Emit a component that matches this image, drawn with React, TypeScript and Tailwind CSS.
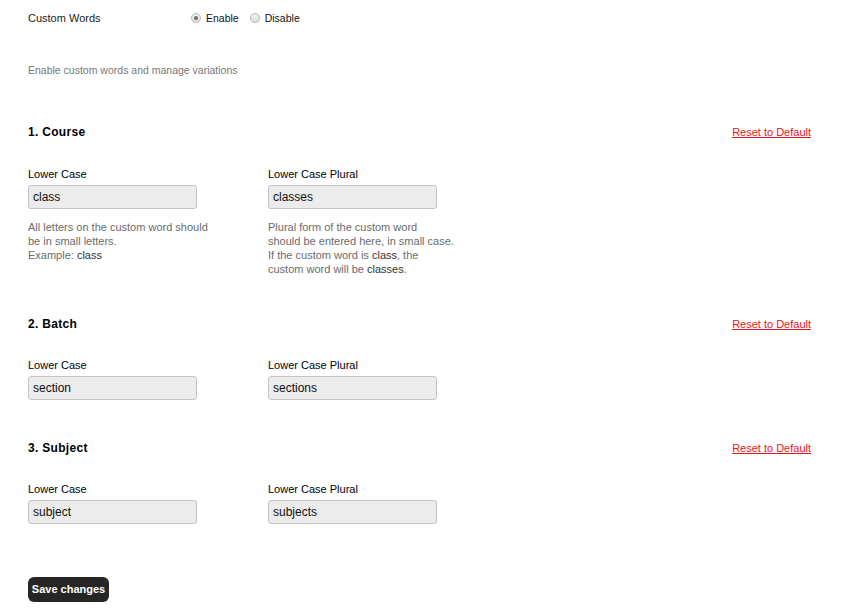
import React, { useState } from 'react';

// Sections of custom words: singular + plural forms
const sections = [
  {
    no: 1,
    title: 'Course',
    singular: 'class',
    plural: 'classes',
    help: true,
  },
  { no: 2, title: 'Batch', singular: 'section', plural: 'sections', help: false },
  { no: 3, title: 'Subject', singular: 'subject', plural: 'subjects', help: false },
];

const Radio: React.FC<{ checked: boolean; label: string; onClick: () => void }> = ({ checked, label, onClick }) => (
  <label className="flex items-center cursor-pointer" onClick={onClick}>
    <span className="w-[10px] h-[10px] rounded-full border border-[#b5b5b5] bg-gradient-to-b from-[#f4f4f4] to-[#dcdcdc] flex items-center justify-center">
      {checked && <span className="w-[4px] h-[4px] rounded-full bg-[#6a6a6a]" />}
    </span>
    <span className="ml-[5px] text-[10.5px] text-[#111]">{label}</span>
  </label>
);

const App: React.FC = () => {
  const [enabled, setEnabled] = useState(true);
  const [values, setValues] = useState(sections.map((s) => ({ singular: s.singular, plural: s.plural })));

  const update = (i: number, key: 'singular' | 'plural', v: string) => {
    const next = [...values];
    next[i] = { ...next[i], [key]: v };
    setValues(next);
  };

  return (
    <div className="min-h-screen bg-white pl-7 pr-[38px] pt-[10px] font-['Liberation_Sans',Arial,sans-serif] text-[#111]">
      {/* Toggle row */}
      <div className="flex items-center h-4 leading-4">
        <div className="w-[163px] text-[11px] text-[#222]">Custom Words</div>
        <div className="flex items-center gap-[11px]">
          <Radio checked={enabled} label="Enable" onClick={() => setEnabled(true)} />
          <Radio checked={!enabled} label="Disable" onClick={() => setEnabled(false)} />
        </div>
      </div>
      <p className="mt-[36px] text-[10.5px] leading-4 text-[#777]">Enable custom words and manage variations</p>

      {sections.map((s, i) => (
        <div key={s.no} className={i === 0 ? 'mt-[46px]' : 'mt-[40px]'}>
          <div className="flex items-center justify-between h-4 leading-4">
            <h3 className="text-[12px] font-bold text-black tracking-[0.3px]">
              {s.no}. {s.title}
            </h3>
            <a href="#" className="text-[11px] text-[#e8141b] underline">Reset to Default</a>
          </div>

          <div className={`flex gap-[71px] ${i === 0 ? 'mt-[26px]' : 'mt-[25px]'}`}>
            <div className="w-[169px]">
              <label className="block text-[11px] leading-4 text-black">Lower Case</label>
              <input
                value={values[i].singular}
                onChange={(e) => update(i, 'singular', e.target.value)}
                className="mt-[3px] block w-[169px] h-[24px] px-[4px] rounded-[3px] border border-[#c4c4c4] bg-[#ececec] text-[12px] text-[#111] focus:outline-none"
              />
              {s.help && (
                <p className="mt-[11px] text-[11px] leading-[14px] text-[#6b6b6b] whitespace-nowrap">
                  All letters on the custom word should<br />
                  be in small letters.<br />
                  Example: <span className="text-[#333]">class</span>
                </p>
              )}
            </div>
            <div className="w-[169px]">
              <label className="block text-[11px] leading-4 text-black">Lower Case Plural</label>
              <input
                value={values[i].plural}
                onChange={(e) => update(i, 'plural', e.target.value)}
                className="mt-[3px] block w-[169px] h-[24px] px-[4px] rounded-[3px] border border-[#c4c4c4] bg-[#ececec] text-[12px] text-[#111] focus:outline-none"
              />
              {s.help && (
                <p className="mt-[11px] text-[11px] leading-[14px] text-[#6b6b6b] whitespace-nowrap">
                  Plural form of the custom word<br />
                  should be entered here, in small case.<br />
                  If the custom word is <span className="text-[#333]">class</span>, the<br />
                  custom word will be <span className="text-[#333]">classes</span>.
                </p>
              )}
            </div>
          </div>
        </div>
      ))}

      <button
        type="button"
        className="mt-[53px] h-[25px] w-[81px] rounded-md bg-[#262626] text-white text-[11px] font-bold flex items-center justify-center"
      >
        Save changes
      </button>
    </div>
  );
};

export default App;
